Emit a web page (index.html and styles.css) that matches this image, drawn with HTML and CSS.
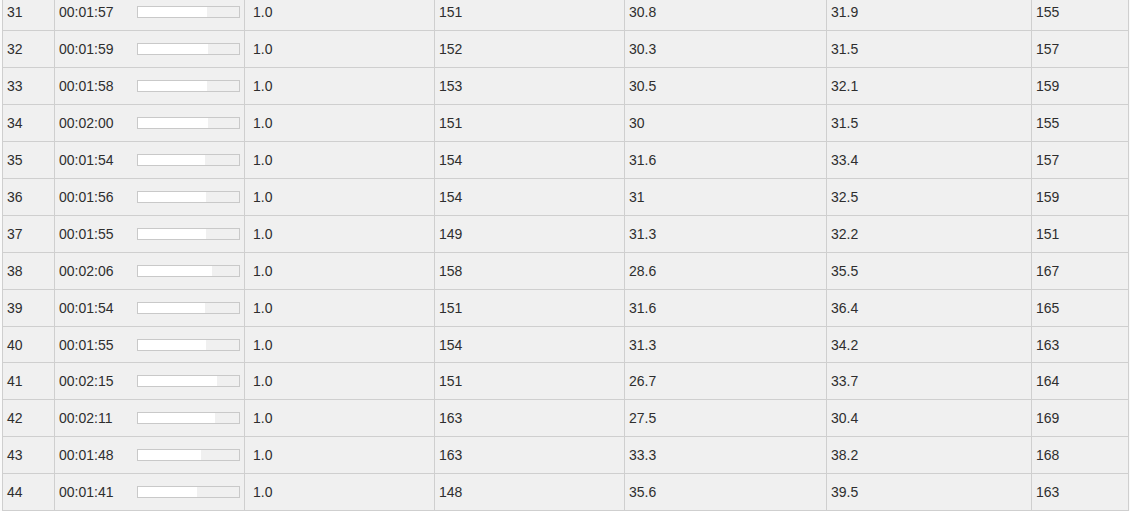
FILE: index.html
```html
<!DOCTYPE html>
<html>
<head>
<meta charset="utf-8">
<link rel="stylesheet" href="styles.css">
</head>
<body>
<div class="wrap">
<table class="grid">
<colgroup>
<col class="c-id"><col class="c-time"><col class="c-a"><col class="c-b"><col class="c-c"><col class="c-d"><col class="c-e">
</colgroup>
<tbody>
<tr><td>31</td><td><div class="tm"><span>00:01:57</span><span class="bar"><span class="fill" style="width:69px"></span></span></div></td><td class="num">1.0</td><td>151</td><td>30.8</td><td>31.9</td><td>155</td></tr>
<tr><td>32</td><td><div class="tm"><span>00:01:59</span><span class="bar"><span class="fill" style="width:70px"></span></span></div></td><td class="num">1.0</td><td>152</td><td>30.3</td><td>31.5</td><td>157</td></tr>
<tr><td>33</td><td><div class="tm"><span>00:01:58</span><span class="bar"><span class="fill" style="width:69px"></span></span></div></td><td class="num">1.0</td><td>153</td><td>30.5</td><td>32.1</td><td>159</td></tr>
<tr><td>34</td><td><div class="tm"><span>00:02:00</span><span class="bar"><span class="fill" style="width:70px"></span></span></div></td><td class="num">1.0</td><td>151</td><td>30</td><td>31.5</td><td>155</td></tr>
<tr><td>35</td><td><div class="tm"><span>00:01:54</span><span class="bar"><span class="fill" style="width:67px"></span></span></div></td><td class="num">1.0</td><td>154</td><td>31.6</td><td>33.4</td><td>157</td></tr>
<tr><td>36</td><td><div class="tm"><span>00:01:56</span><span class="bar"><span class="fill" style="width:68px"></span></span></div></td><td class="num">1.0</td><td>154</td><td>31</td><td>32.5</td><td>159</td></tr>
<tr><td>37</td><td><div class="tm"><span>00:01:55</span><span class="bar"><span class="fill" style="width:68px"></span></span></div></td><td class="num">1.0</td><td>149</td><td>31.3</td><td>32.2</td><td>151</td></tr>
<tr><td>38</td><td><div class="tm"><span>00:02:06</span><span class="bar"><span class="fill" style="width:74px"></span></span></div></td><td class="num">1.0</td><td>158</td><td>28.6</td><td>35.5</td><td>167</td></tr>
<tr><td>39</td><td><div class="tm"><span>00:01:54</span><span class="bar"><span class="fill" style="width:67px"></span></span></div></td><td class="num">1.0</td><td>151</td><td>31.6</td><td>36.4</td><td>165</td></tr>
<tr><td>40</td><td><div class="tm"><span>00:01:55</span><span class="bar"><span class="fill" style="width:68px"></span></span></div></td><td class="num">1.0</td><td>154</td><td>31.3</td><td>34.2</td><td>163</td></tr>
<tr><td>41</td><td><div class="tm"><span>00:02:15</span><span class="bar"><span class="fill" style="width:79px"></span></span></div></td><td class="num">1.0</td><td>151</td><td>26.7</td><td>33.7</td><td>164</td></tr>
<tr><td>42</td><td><div class="tm"><span>00:02:11</span><span class="bar"><span class="fill" style="width:77px"></span></span></div></td><td class="num">1.0</td><td>163</td><td>27.5</td><td>30.4</td><td>169</td></tr>
<tr><td>43</td><td><div class="tm"><span>00:01:48</span><span class="bar"><span class="fill" style="width:63px"></span></span></div></td><td class="num">1.0</td><td>163</td><td>33.3</td><td>38.2</td><td>168</td></tr>
<tr><td>44</td><td><div class="tm"><span>00:01:41</span><span class="bar"><span class="fill" style="width:59px"></span></span></div></td><td class="num">1.0</td><td>148</td><td>35.6</td><td>39.5</td><td>163</td></tr>
</tbody>
</table>
</div>
</body>
</html>
```
FILE: styles.css
```css
html, body {
  margin: 0;
  padding: 0;
  background: #fafafa;
  overflow: hidden;
}
.wrap {
  padding-left: 2px;
  margin-top: -6.6px;
}
.grid {
  border-collapse: collapse;
  table-layout: fixed;
  width: 1127px;
  font-family: "Liberation Sans", Arial, sans-serif;
  font-size: 14px;
  color: #2e2e2e;
  background: #f0f0f0;
}
.c-id { width: 52px; }
.c-time { width: 190px; }
.c-a { width: 190px; }
.c-b { width: 190px; }
.c-c { width: 202px; }
.c-d { width: 205px; }
.c-e { width: 97px; }
.grid tr {
  height: 36.92px;
}
.grid td {
  border: 1px solid #cfcfcf;
  padding: 0 4px 0 4px;
  vertical-align: middle;
  white-space: nowrap;
  line-height: 16px;
}
.grid td.num {
  padding-left: 8px;
}
.tm {
  display: flex;
  align-items: center;
  justify-content: space-between;
}
.bar {
  display: flex;
  width: 101px;
  height: 10px;
  border: 1px solid #c9c9c9;
  background: #f0f0f0;
}
.fill {
  display: block;
  height: 100%;
  background: #ffffff;
}
```
